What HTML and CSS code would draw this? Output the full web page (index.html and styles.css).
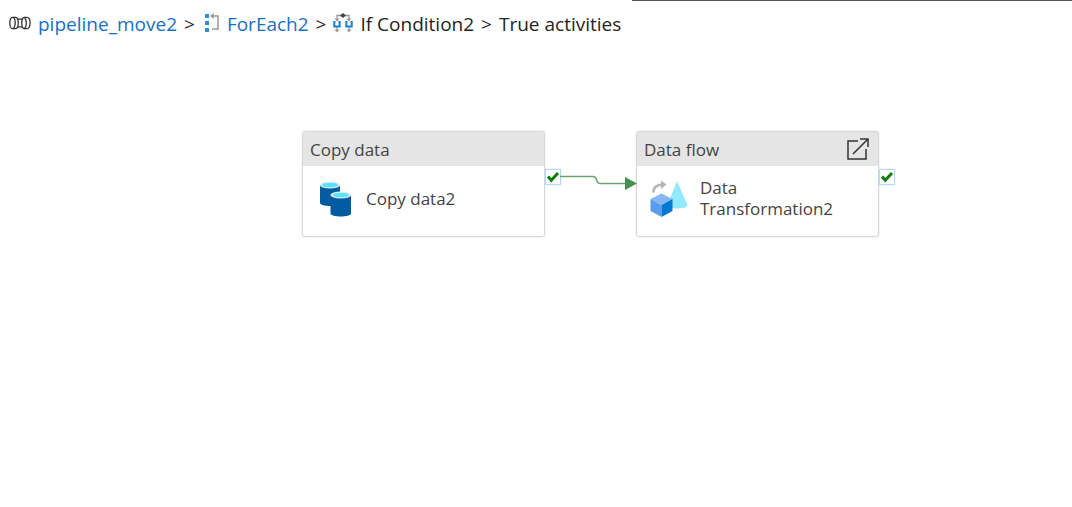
FILE: index.html
```html
<!DOCTYPE html>
<html lang="en">
<head>
<meta charset="utf-8">
<title>pipeline_move2</title>
<link rel="stylesheet" href="styles.css">
</head>
<body>
<div class="panel-edge"></div>
<nav class="breadcrumb" aria-label="Breadcrumb">
  <svg class="icon icon-pipeline" viewBox="0 0 22 14" fill="none" stroke="#333" stroke-width="1.3" aria-hidden="true">
    <path d="M3.500 1.300H7M3.500 12.700H7M15 1.300H18.500M15 12.700H18.500M9 3.200H13M9 10.800H13"/>
    <ellipse cx="3.500" cy="7" rx="2.700" ry="5.700"/>
    <path d="M7 1.300C10 2.500 10 11.500 7 12.700"/>
    <path d="M15 1.300C12 2.500 12 11.500 15 12.700C18 11.500 18 2.500 15 1.300M18.500 1.300C22 2.500 22 11.500 18.500 12.700"/>
  </svg>
  <a class="crumb link" href="#pipeline">pipeline_move2</a>
  <span class="sep">&gt;</span>
  <svg class="icon icon-loop" viewBox="0 0 16 20" aria-hidden="true">
    <path fill="#2b8fe0" d="M1 1h4v4H1zM1 8h4v4H1zM1 15h4v4H1z"/>
    <path fill="none" stroke="#999" stroke-width="1.500" d="M7.500 3H14V16H8M9.800 .8L7.300 3L9.800 5.200"/>
  </svg>
  <a class="crumb link" href="#foreach">ForEach2</a>
  <span class="sep">&gt;</span>
  <svg class="icon icon-branch" viewBox="0 0 20 20" aria-hidden="true">
    <path fill="none" stroke="#999" stroke-width="1.300" d="M4 8V2.500H16V8M4 13V18M16 13V18"/>
    <path fill="#999" d="M1.500 5.500H6.500L4 8.500zM13.500 5.500H18.500L16 8.500zM1.500 16.500H6.500L4 19.500zM13.500 16.500H18.500L16 19.500z"/>
    <path fill="none" stroke="#1683d8" stroke-width="2" d="M2.500 9H1.300V13.500H6.700V9H5.500M14.500 9H13.300V13.500H18.700V9H17.500"/>
    <path fill="#444" d="M10 0L13 2.500L10 5L7 2.500z"/>
  </svg>
  <span class="crumb">If Condition2</span>
  <span class="sep">&gt;</span>
  <span class="crumb" aria-current="page">True activities</span>
</nav>
<main class="canvas">
  <svg class="connector" viewBox="0 0 78 16" aria-hidden="true">
    <path fill="none" stroke="#68a571" stroke-width="1.500" d="M0 2.500H33C39 2.500 34 9.500 41 9.500H66"/>
    <path fill="#468f4e" d="M65 3L77 9.500L65 16z"/>
  </svg>
  <section class="node node-copy">
    <header class="node-head"><span>Copy data</span></header>
    <div class="node-body">
      <svg class="node-icon" viewBox="0 0 40 40" aria-hidden="true">
        <path fill="#005ba1" d="M5 6V24C5 28 25 28 25 24V6z"/>
        <ellipse cx="15" cy="6" rx="10.300" ry="3.500" fill="#e8e8e8"/>
        <ellipse cx="15" cy="6" rx="8" ry="2.300" fill="#50e6ff"/>
        <path fill="#005ba1" d="M15.500 16V34.500C15.500 38.500 36 38.500 36 34.500V16z"/>
        <ellipse cx="25.800" cy="16" rx="10.500" ry="3.500" fill="#e8e8e8"/>
        <ellipse cx="25.800" cy="16" rx="8" ry="2.300" fill="#50e6ff"/>
      </svg>
      <span class="node-name">Copy data2</span>
    </div>
    <span class="port"><svg viewBox="0 0 14 14" aria-label="On success"><path d="M2 6.500L5.300 10.300L12 3"/></svg></span>
  </section>
  <section class="node node-flow">
    <header class="node-head"><span>Data flow</span>
      <button class="open" type="button" aria-label="Open data flow">
        <svg viewBox="0 0 24 24" fill="none" stroke="#333" stroke-width="1.500"><path d="M12 4H2V22H20V12M7 17L22 2M14 2H22V10"/></svg>
      </button>
    </header>
    <div class="node-body">
      <svg class="node-icon" viewBox="0 0 40 40" aria-hidden="true">
        <path fill="#93e9fc" d="M28 2L38.500 26C38 28.500 33 29.500 29 29.500C24 29.500 19 28.500 18.500 26z"/>
        <path fill="none" stroke="#b5b5b5" stroke-width="2.600" d="M4.500 13.500C4.500 8 8 5.500 14 5.500"/>
        <path fill="#b5b5b5" d="M12 1.500L17.500 5.500L12 10z"/>
        <path fill="#86b8f7" d="M1.500 20L12.500 14.500L23.500 20L12.500 26z"/>
        <path fill="#5b9dec" d="M1.500 20L12.500 26V38L1.500 32z"/>
        <path fill="#0078d4" d="M23.500 20L12.500 26V38L23.500 32z"/>
      </svg>
      <span class="node-name">Data Transformation2</span>
    </div>
    <span class="port"><svg viewBox="0 0 14 14" aria-label="On success"><path d="M2 6.500L5.300 10.300L12 3"/></svg></span>
  </section>
</main>
</body>
</html>
```
FILE: styles.css
```css
* { box-sizing: border-box; }
body {
  margin: 0;
  min-height: 100vh;
  display: flex;
  flex-direction: column;
  background: #fff;
  color: #252423;
  font-family: "Segoe UI", "Open Sans", "Noto Sans", sans-serif;
  font-size: 19px;
}
.panel-edge {
  position: absolute;
  top: 0;
  left: 632px;
  right: 0;
  height: 1px;
  background: #555;
}
.breadcrumb {
  display: flex;
  align-items: center;
  gap: 7px;
  height: 48px;
  padding-left: 9px;
  white-space: nowrap;
}
.icon { flex: none; margin-bottom: 3px; }
.icon-pipeline { width: 22px; height: 14px; }
.icon-loop { width: 16px; height: 20px; margin-left: 2px; }
.icon-branch { width: 20px; height: 20px; }
.link { color: #1a6fc0; text-decoration: none; }
.canvas { position: relative; flex: 1; color: #444; font-size: 17px; }
.node {
  position: absolute;
  top: 83px;
  width: 243px;
  border: 1px solid #d8d8d8;
  border-radius: 3px;
  background: #fff;
  box-shadow: 0 0 2px #ddd;
}
.node-copy { left: 302px; }
.node-flow { left: 636px; }
.node-head {
  display: flex;
  align-items: center;
  justify-content: space-between;
  height: 34px;
  padding: 0 8px 0 7px;
  background: #e5e5e5;
}
.open { width: 24px; height: 24px; padding: 0; border: 0; background: none; }
.open svg { display: block; width: 24px; height: 24px; }
.node-body {
  display: flex;
  align-items: center;
  gap: 11px;
  height: 70px;
  padding: 0 12px 4px;
}
.node-icon { flex: none; width: 40px; height: 40px; }
.node-name { padding-bottom: 2px; line-height: 21px; }
.port {
  position: absolute;
  top: 37px;
  right: -17px;
  width: 16px;
  height: 16px;
  border: 1px solid #b5d9f5;
  background: #fff;
  box-shadow: 0 0 1px #b5d9f5;
}
.port svg { display: block; width: 14px; height: 14px; fill: none; stroke: #107c10; stroke-width: 3; }
.connector { position: absolute; left: 560px; top: 126px; width: 78px; height: 16px; z-index: 1; }
```
